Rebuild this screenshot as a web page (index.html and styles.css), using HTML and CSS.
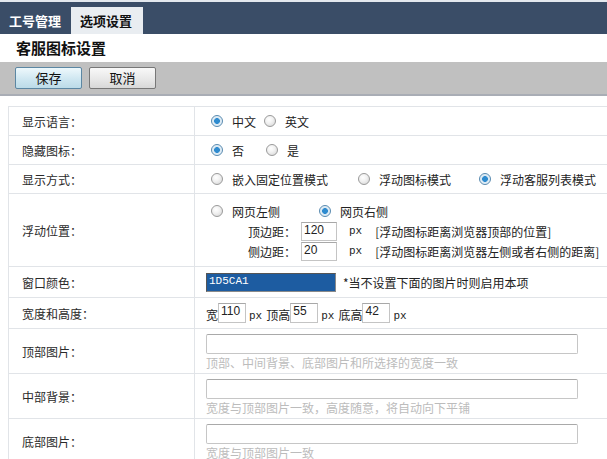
FILE: index.html
```html
<!DOCTYPE html>
<html lang="zh-CN">
<head>
<meta charset="utf-8">
<title>客服图标设置</title>
<link rel="stylesheet" href="styles.css">
</head>
<body>
<div class="topbar">
  <div class="tab">工号管理</div>
  <div class="tab active">选项设置</div>
</div>
<div class="title">客服图标设置</div>
<div class="toolbar">
  <button class="btn btn-save">保存</button>
  <button class="btn btn-cancel">取消</button>
</div>
<table class="form">
  <tr class="r29">
    <td class="label">显示语言：</td>
    <td class="field">
      <div class="opts">
        <span class="opt g8"><span class="radio on"></span>中文</span>
        <span class="opt"><span class="radio"></span>英文</span>
      </div>
    </td>
  </tr>
  <tr class="r29">
    <td class="label">隐藏图标：</td>
    <td class="field">
      <div class="opts">
        <span class="opt g22"><span class="radio on"></span>否</span>
        <span class="opt"><span class="radio"></span>是</span>
      </div>
    </td>
  </tr>
  <tr class="r29">
    <td class="label">显示方式：</td>
    <td class="field">
      <div class="opts">
        <span class="opt g30"><span class="radio"></span>嵌入固定位置模式</span>
        <span class="opt g28"><span class="radio"></span>浮动图标模式</span>
        <span class="opt"><span class="radio on"></span>浮动客服列表模式</span>
      </div>
    </td>
  </tr>
  <tr class="r73">
    <td class="label">浮动位置：</td>
    <td class="field float">
      <div class="opts line">
        <span class="opt g39"><span class="radio"></span>网页左侧</span>
        <span class="opt"><span class="radio on"></span>网页右侧</span>
      </div>
      <div class="line sub">
        <span class="sublabel">顶边距：</span><span class="box small">120</span><span class="px">px</span><span class="note">[浮动图标距离浏览器顶部的位置]</span>
      </div>
      <div class="line sub">
        <span class="sublabel">侧边距：</span><span class="box small">20</span><span class="px">px</span><span class="note">[浮动图标距离浏览器左侧或者右侧的距离]</span>
      </div>
    </td>
  </tr>
  <tr class="r31">
    <td class="label">窗口颜色：</td>
    <td class="field">
      <div class="opts">
        <span class="color">1D5CA1</span><span class="tip">*当不设置下面的图片时则启用本项</span>
      </div>
    </td>
  </tr>
  <tr class="r31">
    <td class="label">宽度和高度：</td>
    <td class="field">
      <div class="dims">
        <span>宽</span><span class="box num">110</span><span class="px">px</span>
        <span>顶高</span><span class="box num">55</span><span class="px">px</span>
        <span>底高</span><span class="box num">42</span><span class="px">px</span>
      </div>
    </td>
  </tr>
  <tr class="r45">
    <td class="label">顶部图片：</td>
    <td class="field img">
      <div class="wide"></div>
      <div class="hint">顶部、中间背景、底部图片和所选择的宽度一致</div>
    </td>
  </tr>
  <tr class="r45">
    <td class="label">中部背景：</td>
    <td class="field img">
      <div class="wide"></div>
      <div class="hint">宽度与顶部图片一致，高度随意，将自动向下平铺</div>
    </td>
  </tr>
  <tr class="r45">
    <td class="label">底部图片：</td>
    <td class="field img">
      <div class="wide"></div>
      <div class="hint">宽度与顶部图片一致</div>
    </td>
  </tr>
</table>
</body>
</html>
```
FILE: styles.css
```css
* { box-sizing: border-box; }
html, body { margin: 0; padding: 0; background: #fff; overflow: hidden; }
body {
  width: 607px;
  height: 459px;
  font-family: "Noto Sans CJK SC", "Noto Sans", sans-serif;
  font-size: 12px;
  color: #222;
}
.topbar {
  height: 34px;
  background: #3a4d67;
  border-top: 2px solid #e3e8ee;
  display: flex;
  align-items: flex-end;
}
.tab {
  height: 27px;
  line-height: 27px;
  font-size: 13px;
  font-weight: bold;
  color: #fff;
  padding: 0 10px 0 9px;
}
.tab.active { background: #e9edf1; color: #111; padding-right: 11px; }
.title {
  height: 28px;
  line-height: 28px;
  padding-left: 16px;
  font-size: 15px;
  font-weight: bold;
  color: #111;
}
.toolbar {
  height: 34px;
  background: #c0c0c0;
  border-bottom: 2px solid #a9adb5;
  padding: 5px 0 0 15px;
  display: flex;
  gap: 7px;
  align-items: flex-start;
}
.btn {
  width: 67px;
  height: 22px;
  font-family: "Noto Sans CJK SC", sans-serif;
  font-size: 13px;
  line-height: 18px;
  padding: 0;
  color: #111;
  border-radius: 2px;
}
.btn-save {
  border: 1px solid #5c87a3;
  background: linear-gradient(#eef8fc, #cfe7f1 55%, #bcdbe8);
}
.btn-cancel {
  border: 1px solid #777;
  background: linear-gradient(#f8f8f8, #e8e8e8 55%, #d8d8d8);
}
.form {
  margin: 10px 0 0 8px;
  border-collapse: collapse;
  width: 620px;
}
.form td { border: 1px solid #e1e4e8; padding: 0; }
.form .label {
  width: 186px;
  padding-left: 13px;
  vertical-align: middle;
  color: #2a2a2a;
}
.field { padding-left: 11px !important; vertical-align: middle; white-space: nowrap; }
.r29 { height: 29px; }
.r31 { height: 31px; }
.r45 { height: 45px; }
.r73 { height: 73px; }

.opts { display: flex; align-items: center; }
.opt { display: inline-flex; align-items: center; }
.g8 { margin-right: 8px; }
.g22 { margin-right: 22px; }
.g28 { margin-right: 28px; }
.g30 { margin-right: 30px; }
.g39 { margin-right: 39px; }
.radio {
  display: inline-block;
  width: 12px;
  height: 12px;
  border-radius: 50%;
  border: 1px solid #9b9b9b;
  background: radial-gradient(circle at 40% 35%, #fff 0, #f2f2f2 40%, #d2d2d2 100%);
  margin: 0 9px 0 0;
}
.opts > .opt:first-child .radio { margin-left: 5px; }
.radio.on {
  border-color: #5a8bb0;
  background: radial-gradient(circle, #2f8bcf 0, #2f8bcf 2.6px, #d8e8f3 3.2px, #f4f8fb 100%);
}

.float { vertical-align: top; padding-top: 7px !important; }
.float .line { height: 20px; display: flex; align-items: center; }
.float .sub { padding-left: 42px; }
.sublabel { width: 53px; }
.box {
  display: inline-block;
  border: 1px solid #c4c4c4;
  border-top-color: #a8a8a8;
  background: #fff;
  font-family: "Liberation Sans", sans-serif;
  font-size: 12px;
  line-height: 12px;
  padding: 1px 2px;
  color: #222;
}
.box.small { width: 36px; height: 19px; }
.px { font-family: "Liberation Mono", monospace; font-size: 11px; margin: 0 13px 0 12px; }

.color {
  display: inline-block;
  width: 130px;
  height: 19px;
  background: #1d5ca1;
  border: 1px solid #8a8a8a;
  border-top-color: #555;
  border-left-color: #555;
  color: #fff;
  font-family: "Liberation Mono", monospace;
  font-size: 11px;
  line-height: 14px;
  padding-left: 2px;
}
.tip { margin-left: 7px; }

.dims { display: flex; align-items: flex-end; height: 20px; }
.dims > span { line-height: 16px; }
.box.num { width: 28px; height: 20px; line-height: 12px; padding-top: 1px; }
.dims .px { margin: 0 4px 0 3px; line-height: 14px; }

.img { vertical-align: top; padding-top: 5px !important; }
.wide {
  width: 372px;
  height: 20px;
  border: 1px solid #c6c6c6;
  border-top-color: #a9a9a9;
  border-radius: 2px;
  background: #fff;
}
.hint { color: #bcbcbc; line-height: 16px; margin-top: 1px; }
```
